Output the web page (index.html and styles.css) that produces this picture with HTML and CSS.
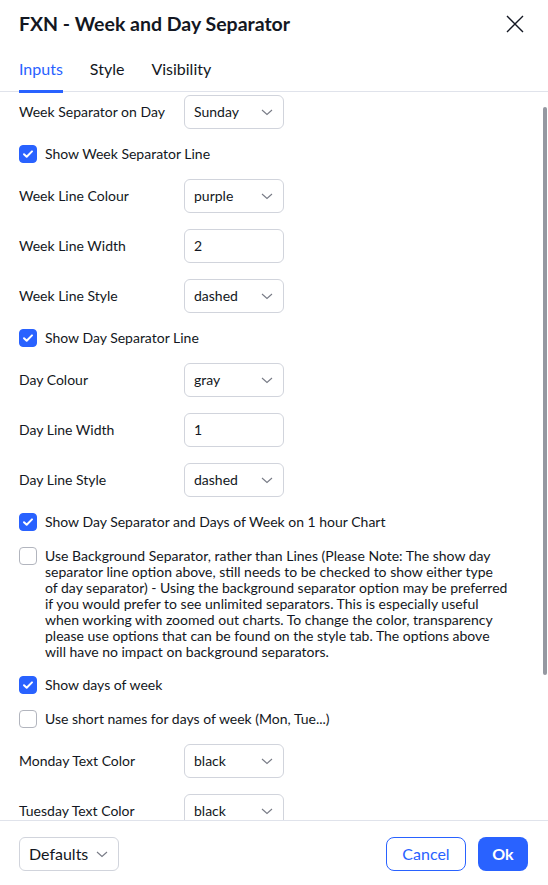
FILE: index.html
```html
<!DOCTYPE html>
<html lang="en">
<head>
<meta charset="utf-8">
<title>FXN - Week and Day Separator</title>
<link rel="stylesheet" href="styles.css">
</head>
<body>
<div class="dialog">
  <div class="header">
    <div class="title">FXN - Week and Day Separator</div>
    <svg class="close" width="18" height="18" viewBox="0 0 18 18"><path d="M1 1L17 17M17 1L1 17" stroke="#131722" stroke-width="1.4" fill="none"/></svg>
  </div>
  <div class="tabs">
    <div class="tab active">Inputs</div>
    <div class="tab">Style</div>
    <div class="tab">Visibility</div>
  </div>
  <div class="body">
    <div class="content">
      <div class="row"><div class="label">Week Separator on Day</div><div class="select"><span>Sunday</span><svg class="chev" width="12" height="7" viewBox="0 0 12 7"><path d="M1 1l5 4.5L11 1" stroke="#787b86" stroke-width="1.1" fill="none"/></svg></div></div>
      <div class="check"><span class="box on"><svg width="18" height="18" viewBox="0 0 18 18"><path d="M5 9.2l2.7 2.6L13 6.4" stroke="#fff" stroke-width="2" fill="none" stroke-linecap="round" stroke-linejoin="round"/></svg></span><span class="ctext">Show Week Separator Line</span></div>
      <div class="row"><div class="label">Week Line Colour</div><div class="select"><span>purple</span><svg class="chev" width="12" height="7" viewBox="0 0 12 7"><path d="M1 1l5 4.5L11 1" stroke="#787b86" stroke-width="1.1" fill="none"/></svg></div></div>
      <div class="row"><div class="label">Week Line Width</div><div class="select"><span>2</span></div></div>
      <div class="row"><div class="label">Week Line Style</div><div class="select"><span>dashed</span><svg class="chev" width="12" height="7" viewBox="0 0 12 7"><path d="M1 1l5 4.5L11 1" stroke="#787b86" stroke-width="1.1" fill="none"/></svg></div></div>
      <div class="check"><span class="box on"><svg width="18" height="18" viewBox="0 0 18 18"><path d="M5 9.2l2.7 2.6L13 6.4" stroke="#fff" stroke-width="2" fill="none" stroke-linecap="round" stroke-linejoin="round"/></svg></span><span class="ctext">Show Day Separator Line</span></div>
      <div class="row"><div class="label">Day Colour</div><div class="select"><span>gray</span><svg class="chev" width="12" height="7" viewBox="0 0 12 7"><path d="M1 1l5 4.5L11 1" stroke="#787b86" stroke-width="1.1" fill="none"/></svg></div></div>
      <div class="row"><div class="label">Day Line Width</div><div class="select"><span>1</span></div></div>
      <div class="row"><div class="label">Day Line Style</div><div class="select"><span>dashed</span><svg class="chev" width="12" height="7" viewBox="0 0 12 7"><path d="M1 1l5 4.5L11 1" stroke="#787b86" stroke-width="1.1" fill="none"/></svg></div></div>
      <div class="check"><span class="box on"><svg width="18" height="18" viewBox="0 0 18 18"><path d="M5 9.2l2.7 2.6L13 6.4" stroke="#fff" stroke-width="2" fill="none" stroke-linecap="round" stroke-linejoin="round"/></svg></span><span class="ctext">Show Day Separator and Days of Week on 1 hour Chart</span></div>
      <div class="check multi"><span class="box"></span><span class="ctext">Use Background Separator, rather than Lines (Please Note: The show day<br>separator line option above, still needs to be checked to show either type<br>of day separator) - Using the background separator option may be preferred<br>if you would prefer to see unlimited separators. This is especially useful<br>when working with zoomed out charts. To change the color, transparency<br>please use options that can be found on the style tab. The options above<br>will have no impact on background separators.</span></div>
      <div class="check"><span class="box on"><svg width="18" height="18" viewBox="0 0 18 18"><path d="M5 9.2l2.7 2.6L13 6.4" stroke="#fff" stroke-width="2" fill="none" stroke-linecap="round" stroke-linejoin="round"/></svg></span><span class="ctext">Show days of week</span></div>
      <div class="check"><span class="box"></span><span class="ctext">Use short names for days of week (Mon, Tue...)</span></div>
      <div class="row"><div class="label">Monday Text Color</div><div class="select"><span>black</span><svg class="chev" width="12" height="7" viewBox="0 0 12 7"><path d="M1 1l5 4.5L11 1" stroke="#787b86" stroke-width="1.1" fill="none"/></svg></div></div>
      <div class="row"><div class="label">Tuesday Text Color</div><div class="select"><span>black</span><svg class="chev" width="12" height="7" viewBox="0 0 12 7"><path d="M1 1l5 4.5L11 1" stroke="#787b86" stroke-width="1.1" fill="none"/></svg></div></div>
    </div>
    <div class="scrollbar"></div>
  </div>
  <div class="footer">
    <div class="select defaults"><span>Defaults</span><svg class="chev" width="12" height="7" viewBox="0 0 12 7"><path d="M1 1l5 4.5L11 1" stroke="#787b86" stroke-width="1.1" fill="none"/></svg></div>
    <div class="buttons">
      <div class="btn cancel">Cancel</div>
      <div class="btn ok">Ok</div>
    </div>
  </div>
</div>
</body>
</html>
```
FILE: styles.css
```css
* { box-sizing: border-box; }
html, body { margin: 0; padding: 0; background: #fff; }
body {
  font-family: Lato, "Liberation Sans", Arial, sans-serif;
  color: #131722;
  font-size: 14px;
}
.dialog {
  width: 548px;
  height: 885px;
  display: flex;
  flex-direction: column;
  background: #fff;
  overflow: hidden;
}
.header {
  height: 48px;
  flex: none;
  display: flex;
  align-items: center;
  justify-content: space-between;
  padding: 0 24px 2px 19px;
}
.title {
  font-size: 19.5px;
  font-weight: 700;
  color: #131722;
}
.close { display: block; margin-top: 2px; }
.tabs {
  height: 44px;
  flex: none;
  display: flex;
  gap: 27px;
  padding: 0 19px 2px 19px;
  border-bottom: 1px solid #e0e3eb;
}
.tab {
  position: relative;
  display: flex;
  align-items: center;
  font-size: 16px;
  color: #131722;
}
.tab.active { color: #2962ff; }
.tab.active::after {
  content: "";
  position: absolute;
  left: 0;
  right: 0;
  bottom: -4px;
  height: 3px;
  background: #2962ff;
}
.body {
  position: relative;
  flex: 1;
  overflow: hidden;
}
.content {
  height: 100%;
  overflow: hidden;
  padding: 3px 19px 0 19px;
  display: flex;
  flex-direction: column;
  gap: 16px;
}
.row {
  flex: none;
  display: grid;
  grid-template-columns: 165px 100px;
  align-items: center;
  height: 34px;
}
.label { font-size: 14px; padding-bottom: 2px; }
.select {
  height: 34px;
  border: 1px solid #d1d4dc;
  border-radius: 6px;
  display: flex;
  align-items: center;
  justify-content: space-between;
  padding: 0 10px 2px 9px;
  font-size: 14px;
}
.chev { display: block; margin-top: 2px; }
.check {
  flex: none;
  display: flex;
  align-items: center;
  gap: 8px;
  min-height: 18px;
}
.check.multi { align-items: flex-start; }
.box {
  flex: none;
  width: 18px;
  height: 18px;
  border-radius: 4px;
  border: 1px solid #b2b5be;
  background: #fff;
  display: flex;
}
.box.on {
  background: #2962ff;
  border-color: #2962ff;
}
.box.on svg { margin: -1px; }
.ctext { font-size: 14px; line-height: 18px; }
.multi .ctext { line-height: 16px; padding-top: 1px; }
.scrollbar {
  position: absolute;
  right: 1px;
  top: 15px;
  width: 4px;
  height: 568px;
  border-radius: 2px;
  background: #9598a1;
}
.footer {
  height: 65px;
  flex: none;
  border-top: 1px solid #e0e3eb;
  display: flex;
  justify-content: space-between;
  padding: 16px 20px 0 19px;
}
.defaults {
  width: 100px;
  font-size: 16px;
}
.buttons {
  display: flex;
  gap: 12px;
}
.btn {
  height: 34px;
  border-radius: 8px;
  display: flex;
  align-items: center;
  justify-content: center;
  font-size: 16px;
  padding-bottom: 2px;
}
.cancel {
  width: 80px;
  border: 1px solid #2962ff;
  color: #2962ff;
}
.ok {
  width: 50px;
  background: #2962ff;
  color: #fff;
  font-weight: 700;
}
```
